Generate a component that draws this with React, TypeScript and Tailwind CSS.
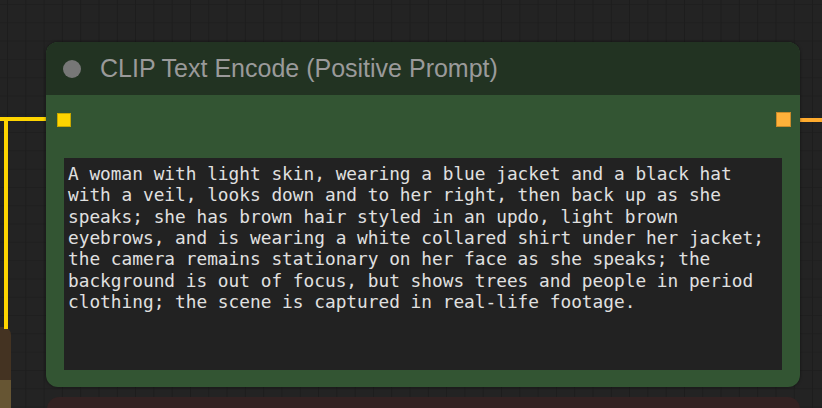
import React from "react";

const promptLines = [
  "A woman with light skin, wearing a blue jacket and a black hat",
  "with a veil, looks down and to her right, then back up as she",
  "speaks; she has brown hair styled in an updo, light brown",
  "eyebrows, and is wearing a white collared shirt under her jacket;",
  "the camera remains stationary on her face as she speaks; the",
  "background is out of focus, but shows trees and people in period",
  "clothing; the scene is captured in real-life footage.",
];

export default function App() {
  return (
    <div
      className="relative w-[822px] h-[408px] overflow-hidden bg-[#232323] bg-[linear-gradient(to_right,#1d1d1d_1px,transparent_1px),linear-gradient(to_bottom,#1f1f1f_1px,transparent_1px)] bg-[length:18.3px_18.3px] bg-[position:7px_4px]"
    >
      {/* yellow node peeking in, bottom left */}
      <div className="absolute left-[-60px] top-[327px] w-[71px] h-[120px] rounded-tr-[8px] overflow-hidden flex flex-col">
        <div className="h-[53px] bg-[#443322]" />
        <div className="flex-1 bg-[#665533]" />
      </div>

      {/* red node below */}
      <div className="absolute left-[47px] top-[397px] w-[753px] h-[40px] rounded-t-[12px] bg-[#332222]" />

      {/* wires */}
      <div className="absolute left-[4px] top-[117px] w-[4px] h-[212px] bg-[#ffd500]" />
      <div className="absolute left-0 top-[117px] w-[46px] h-[4px] bg-[#ffd500]" />
      <div className="absolute left-[800px] top-[118px] w-[22px] h-[4px] bg-[#ffab2e]" />

      {/* CLIP node */}
      <div className="absolute left-[46px] top-[42px] w-[754px] h-[345px] rounded-[12px] overflow-hidden flex flex-col bg-[#335533] shadow-[0_0_3px_rgba(0,0,0,0.5)]">
        <div className="h-[53px] shrink-0 bg-[#223322] flex items-center pl-[17px] gap-[19px]">
          <div className="w-[18px] h-[18px] rounded-full bg-[#777777]" />
          <span className="text-[25px] leading-none text-[#9a9a9a] font-['Liberation_Sans',Arial,sans-serif] pb-[1px]">
            CLIP Text Encode (Positive Prompt)
          </span>
        </div>
        <div className="flex justify-between items-start px-[11px] pt-[18px] h-[63px] shrink-0">
          <div className="w-[14px] h-[14px] bg-[#ffd500] border border-[#c9a800]" />
          <div className="w-[15px] h-[15px] mt-[-1px] mr-[-2px] bg-[#ffb13a] border border-[#c98a2a]" />
        </div>
        <div className="mx-[18px] h-[212px] bg-[#222222] px-[4px] pt-[5px] text-[17.8px] leading-[21.35px] text-[#e0e0e0] font-['DejaVu_Sans_Mono',monospace] whitespace-pre">
          {promptLines.map((line, i) => (
            <div key={i}>{line}</div>
          ))}
        </div>
      </div>
    </div>
  );
}
